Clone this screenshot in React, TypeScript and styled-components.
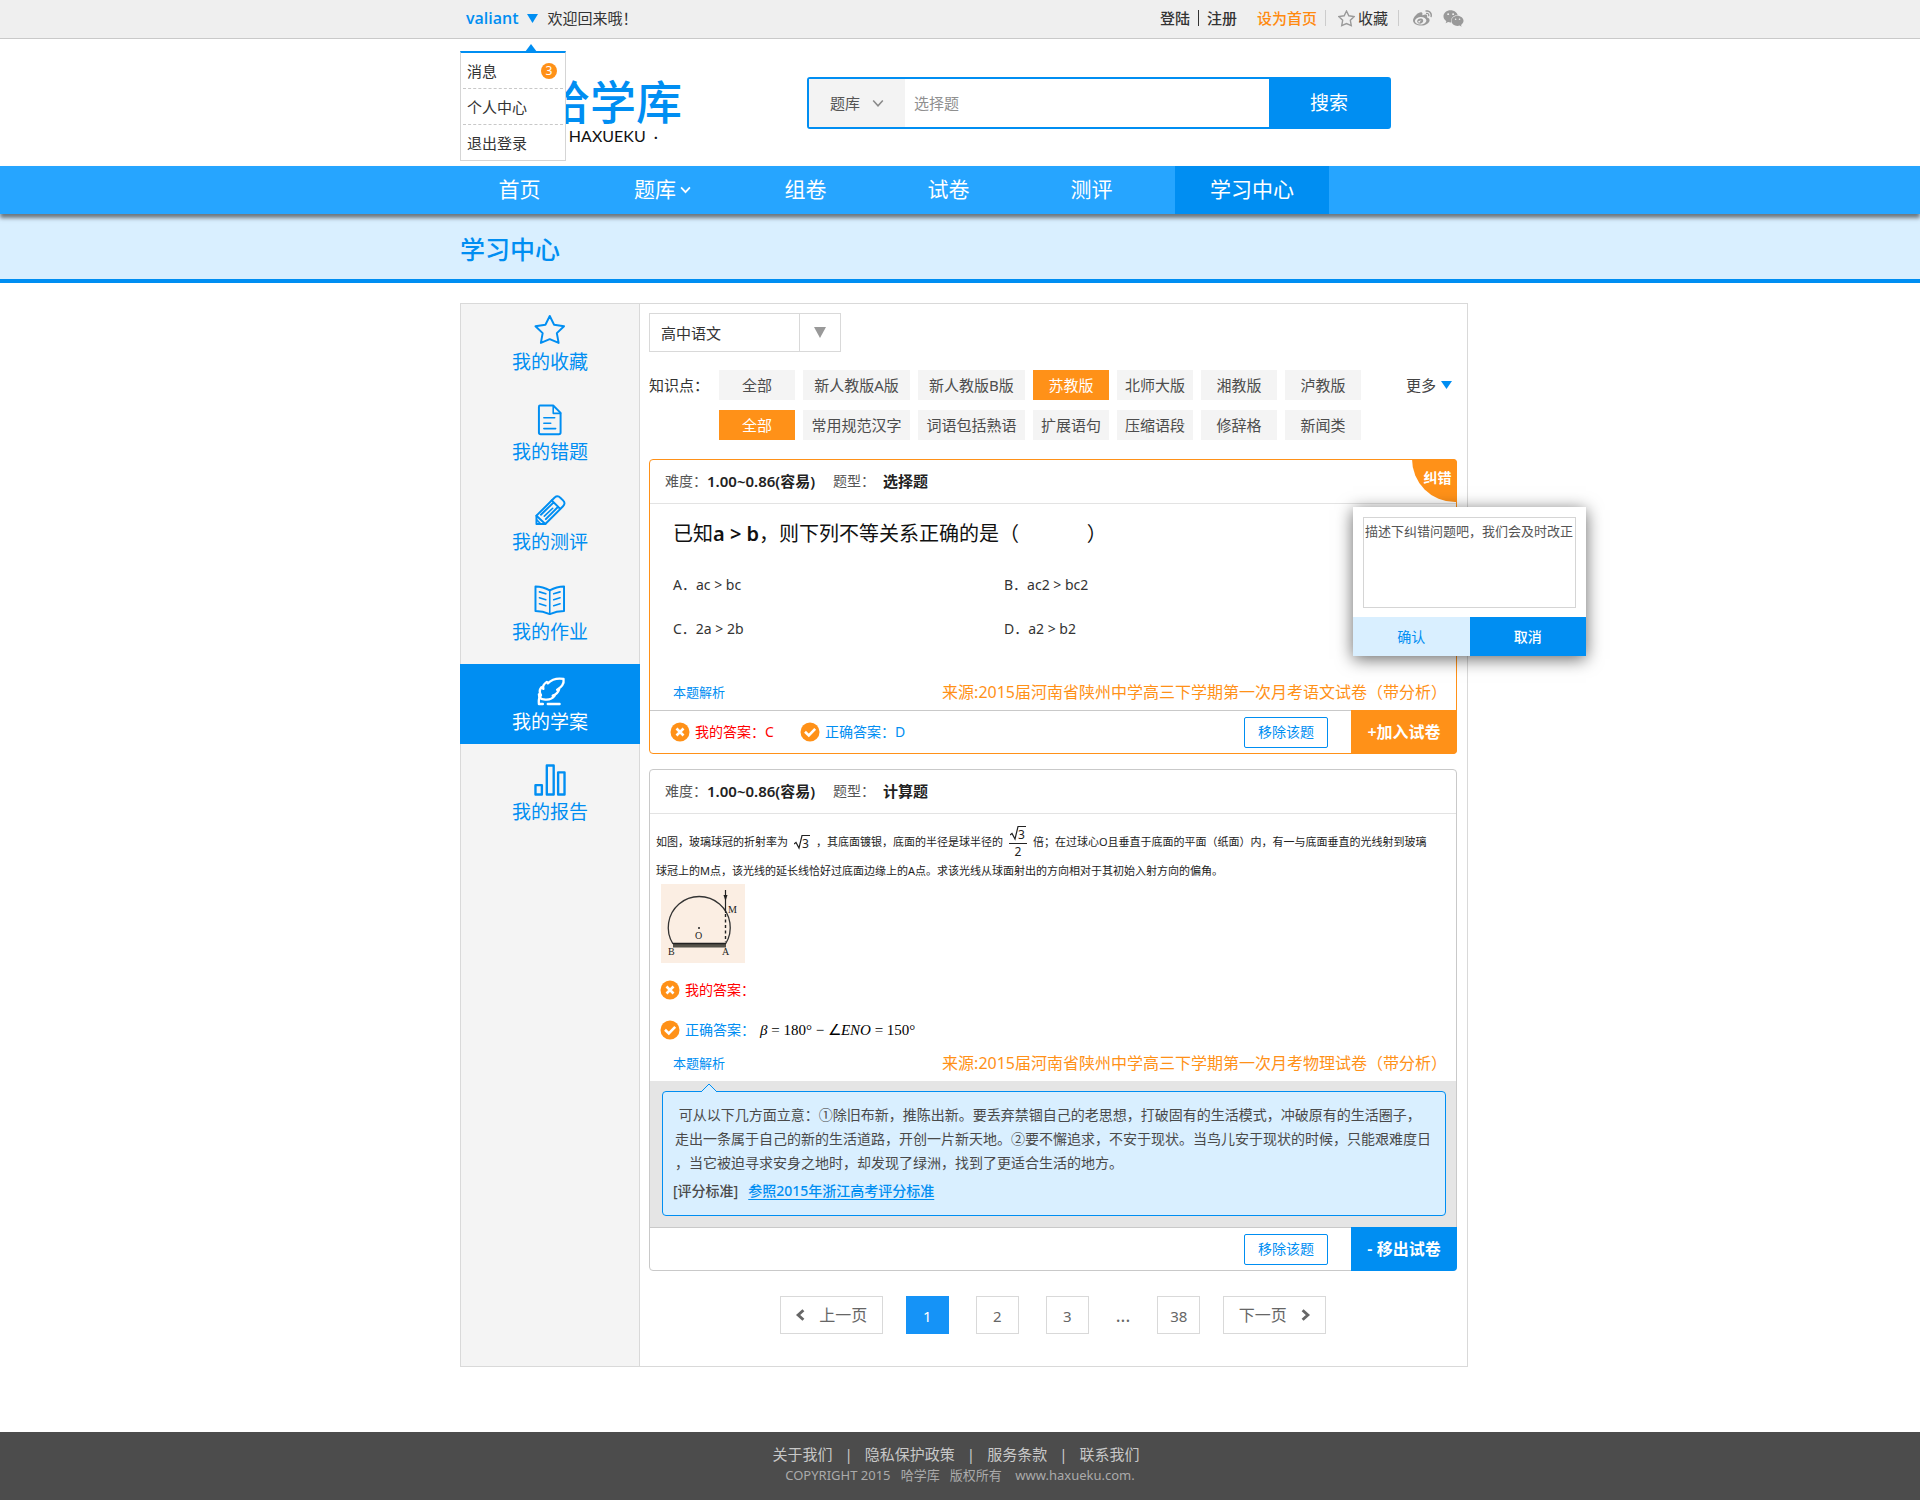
import React, { useState } from "react";
import styled, { createGlobalStyle, css } from "styled-components";
import { FaWeibo, FaWeixin } from "react-icons/fa";

const blue = "#008ef2";
const orange = "#ff9118";
const sans = `"Noto Sans", "Noto Sans CJK SC", sans-serif`;

const GlobalStyle = createGlobalStyle`
  *, *::before, *::after { box-sizing: border-box; }
  body { margin: 0; background: #fff; color: #333; font: 14px/20px ${sans}; }
  a { color: inherit; text-decoration: none; }
  button, input, select, textarea { font: inherit; color: inherit; margin: 0; }
  button { cursor: pointer; padding: 0; border: 0; background: none; }
  ul { list-style: none; margin: 0; padding: 0; }
  p, h1, h2 { margin: 0; }
`;

const Page = styled.div`
  display: flex;
  flex-direction: column;
  min-height: 100vh;
`;

const Container = styled.div`
  width: 100%;
  max-width: 1016px;
  margin: 0 auto;
  padding-left: 8px;
`;

/* ---------- top bar ---------- */

const TopBar = styled.div`
  background: #efefef;
  border-bottom: 1px solid #c9c9c9;
`;

const TopInner = styled(Container)`
  display: flex;
  align-items: center;
  justify-content: space-between;
  height: 38px;
  font-size: 15px;
`;

const Greeting = styled.div`
  position: relative;
  display: flex;
  align-items: center;
  gap: 10px;
  padding: 0 0 2px 6px;
`;

const UserButton = styled.button`
  display: flex;
  align-items: center;
  gap: 8px;
  color: ${blue};
  font: 600 16px/20px "Open Sans", ${sans};
`;

const UserMenu = styled.ul`
  position: absolute;
  top: 43px;
  left: 0;
  z-index: 5;
  width: 106px;
  background: #fff;
  border: 1px solid #d5d5d5;
  border-top: 2px solid ${blue};
  padding: 0 2px;
`;

const MenuArrow = styled.span`
  position: absolute;
  top: -9px;
  left: 64px;
  display: flex;
`;

const MenuItem = styled.li`
  & + & { border-top: 1px dashed #c8c8c8; }
  a {
    display: flex;
    align-items: center;
    justify-content: space-between;
    height: 35px;
    padding: 0 6px 0 4px;
  }
`;

const Badge = styled.span`
  width: 16px;
  border-radius: 8px;
  background: ${orange};
  color: #fff;
  font-size: 12px;
  line-height: 16px;
  text-align: center;
`;

const TopLinks = styled.nav`
  display: flex;
  align-items: center;
  padding: 0 4px 2px 0;
`;

const TopLink = styled.a<{ $tone?: string; $strong?: boolean }>`
  display: flex;
  align-items: center;
  gap: 3px;
  color: ${(p) => p.$tone ?? "#333"};
  font-weight: ${(p) => (p.$strong ? 500 : 400)};
`;

const Bar = styled.span<{ $color?: string; $gap?: number }>`
  width: 1px;
  height: 16px;
  margin: 0 ${(p) => p.$gap ?? 8}px;
  background: ${(p) => p.$color ?? "#333"};
`;

const Space = styled.span<{ $w: number }>`
  width: ${(p) => p.$w}px;
`;

/* ---------- header ---------- */

const HeaderInner = styled(Container)`
  display: flex;
  align-items: flex-start;
  justify-content: space-between;
  height: 127px;
  padding-top: 38px;
  padding-right: 77px;
`;

const Logo = styled.a`
  display: flex;
  flex-direction: column;
  width: 222px;
  align-items: flex-end;
  color: ${blue};
  font-size: 46px;
  font-weight: 500;
  line-height: 48px;
`;

const LogoSub = styled.span`
  padding-right: 24px;
  color: #111;
  font: 400 16px/22px Lato, sans-serif;
  white-space: pre;
`;

const Search = styled.form`
  display: flex;
  width: 584px;
  height: 52px;
  border: 2px solid ${blue};
  border-radius: 3px;
  font-size: 15px;
`;

const Category = styled.button`
  display: flex;
  align-items: center;
  justify-content: center;
  gap: 12px;
  width: 96px;
  background: #f3f3f3;
  color: #555;
  svg { color: #8a8a8a; }
`;

const SearchInput = styled.input`
  flex: 1;
  min-width: 0;
  border: 0;
  padding: 0 9px;
  outline: none;
  &::placeholder { color: #8f8f8f; opacity: 1; }
`;

const SearchButton = styled.button`
  width: 120px;
  background: ${blue};
  color: #fff;
  font-size: 19px;
`;

const NavBar = styled.nav`
  position: relative;
  z-index: 1;
  background: #26a5ff;
  box-shadow: 0 4px 4px rgba(0, 0, 0, 0.5);
`;

const NavList = styled(Container)`
  display: flex;
  gap: 24px;
`;

const NavLink = styled.a<{ $active?: boolean }>`
  display: flex;
  align-items: center;
  justify-content: center;
  gap: 4px;
  width: ${(p) => (p.$active ? 154 : 119)}px;
  height: 48px;
  padding-bottom: 2px;
  background: ${(p) => (p.$active ? blue : "transparent")};
  color: #fff;
  font-size: 21px;
`;

const TitleBand = styled.div`
  background: #d9efff;
  border-bottom: 4px solid ${blue};
`;

const Title = styled.h1`
  padding: 20px 0 15px;
  color: ${blue};
  font-size: 25px;
  font-weight: 500;
  line-height: 30px;
`;

/* ---------- main panel ---------- */

const Main = styled(Container)`
  flex: 1;
  padding-top: 20px;
  padding-bottom: 65px;
`;

const Panel = styled.div`
  display: flex;
  border: 1px solid #d9d9d9;
`;

const Sidebar = styled.nav`
  display: flex;
  flex-direction: column;
  flex: 0 0 179px;
  gap: 10px;
  background: #f4f4f4;
  border-right: 1px solid #d9d9d9;
`;

const SideLink = styled.a<{ $active?: boolean }>`
  display: flex;
  flex-direction: column;
  align-items: center;
  gap: 4px;
  margin: 0 -1px;
  padding: 10px 0;
  background: ${(p) => (p.$active ? blue : "transparent")};
  color: ${(p) => (p.$active ? "#fff" : blue)};
  font-size: 19px;
  line-height: 24px;
`;

const Content = styled.main`
  flex: 1;
  min-width: 0;
  padding: 9px 10px 32px 9px;
`;

const SubjectPicker = styled.label`
  display: flex;
  width: 192px;
  height: 39px;
  border: 1px solid #d9d9d9;
  font-size: 15px;
  select {
    flex: 1;
    min-width: 0;
    padding: 0 11px;
    border: 0;
    background: #fff;
    appearance: none;
    outline: none;
  }
`;

const PickerArrow = styled.span`
  display: flex;
  align-items: center;
  justify-content: center;
  width: 41px;
  border-left: 1px solid #d9d9d9;
  color: #999;
`;

const Filters = styled.div`
  display: grid;
  grid-template-columns: 62px 1fr auto;
  column-gap: 8px;
  row-gap: 10px;
  margin: 18px 5px 19px 0;
  font-size: 15px;
  line-height: 30px;
`;

const Tags = styled.div`
  display: grid;
  grid-template-columns: 76px 107px 107px repeat(4, 76px);
  grid-column: 2;
  gap: 8px;
`;

const Tag = styled.button<{ $on?: boolean }>`
  height: 30px;
  background: ${(p) => (p.$on ? orange : "#f4f4f4")};
  color: ${(p) => (p.$on ? "#fff" : "#4d4d4d")};
  font-size: 15px;
`;

const More = styled.button`
  display: flex;
  align-items: center;
  gap: 5px;
  color: #444;
  svg { color: ${blue}; }
`;

/* ---------- question cards ---------- */

const Card = styled.article<{ $on?: boolean }>`
  position: relative;
  border: 1px solid ${(p) => (p.$on ? orange : "#c9c9c9")};
  border-radius: 4px;
  & + & { margin-top: 15px; }
`;

const CardHead = styled.header`
  display: flex;
  align-items: center;
  height: 44px;
  padding: 0 15px 2px;
  border-bottom: 1px solid #e3e3e3;
  color: #555;
  b { color: #222; font-size: 15px; font-weight: 600; }
  b + span { margin-left: 18px; }
  span + b:last-child { margin-left: 8px; }
`;

const Corner = styled.button`
  position: absolute;
  top: -1px;
  right: -1px;
  width: 45px;
  height: 43px;
  padding: 0 0 6px 6px;
  border-radius: 0 4px 0 45px;
  background: ${orange};
  color: #fff;
  font-weight: 700;
`;

const Popup = styled.form`
  position: absolute;
  z-index: 4;
  top: 47px;
  right: -130px;
  width: 233px;
  background: #fff;
  box-shadow: 0 3px 16px rgba(0, 0, 0, 0.6);
`;

const PopupText = styled.textarea`
  display: block;
  width: 213px;
  height: 91px;
  margin: 10px 10px 9px;
  padding: 3px 1px;
  border: 1px solid #d5d5d5;
  outline: none;
  resize: none;
  overflow: hidden;
  font-size: 13px;
  &::placeholder { color: #555; opacity: 1; }
`;

const PopupActions = styled.div`
  display: grid;
  grid-template-columns: 1fr 1fr;
`;

const PopupButton = styled.button<{ $primary?: boolean }>`
  height: 39px;
  background: ${(p) => (p.$primary ? blue : "#d9efff")};
  color: ${(p) => (p.$primary ? "#fff" : blue)};
  font-weight: ${(p) => (p.$primary ? 500 : 400)};
`;

const Stem = styled.h2`
  padding: 16px 23px 0;
  color: #111;
  font-size: 20px;
  font-weight: 400;
  line-height: 28px;
  white-space: pre-wrap;
  b { font-weight: 600; }
`;

const Options = styled.ul`
  display: grid;
  grid-template-columns: 331px 1fr;
  row-gap: 24px;
  padding: 27px 23px 34px;
`;

const CardSource = styled.div`
  display: flex;
  align-items: center;
  justify-content: space-between;
  height: 37px;
  padding: 0 9px 0 23px;
`;

const ExplainLink = styled.a`
  color: ${blue};
  font-size: 13px;
`;

const SourceLink = styled.a`
  color: ${orange};
  font-size: 16px;
`;

const Answer = styled.span<{ $right?: boolean }>`
  display: flex;
  align-items: center;
  gap: 5px;
  color: ${(p) => (p.$right ? blue : "#f00")};
`;

const CardFoot = styled.footer`
  display: flex;
  align-items: center;
  height: 43px;
  padding-left: 20px;
  border-top: 1px solid #c9c9c9;
  ${Answer} { min-width: 130px; }
`;

const RemoveButton = styled.button`
  width: 84px;
  height: 31px;
  margin: 0 23px 0 auto;
  border: 1px solid ${blue};
  border-radius: 2px;
  color: ${blue};
`;

const PaperButton = styled.button<{ $tone: string }>`
  width: 106px;
  height: 44px;
  margin: -1px -1px -1px 0;
  border-radius: 0 0 4px 0;
  background: ${(p) => p.$tone};
  color: #fff;
  font-size: 16px;
  font-weight: 600;
  white-space: pre;
`;

const Problem = styled.div`
  padding: 8px 6px 0;
  color: #222;
  font-size: 11px;
`;

const ProblemLine = styled.p`
  display: flex;
  align-items: center;
  height: 39px;
  & + & { height: 20px; }
`;

const Fraction = styled.span`
  display: flex;
  flex-direction: column;
  align-items: center;
  margin: 0 6px;
  font: 12px/15px "Noto Sans", sans-serif;
`;

const Numerator = styled.span`
  display: flex;
  padding: 1px 1px 2px;
  border-bottom: 1px solid #222;
`;

const RootWrap = styled.span`
  display: flex;
  margin: 0 6px;
`;

const Figure = styled.div`
  display: flex;
  padding: 3px 5px 0;
`;

const Answers = styled.div`
  display: grid;
  row-gap: 20px;
  padding: 17px 10px 4px;
`;

const AnswerLine = styled.div`
  display: flex;
  align-items: center;
  gap: 5px;
  height: 20px;
`;

const Formula = styled.span`
  color: #000;
  font: 15px/20px "Liberation Serif", serif;
  white-space: pre;
`;

const Explain = styled.section`
  padding: 10px 10px 11px 12px;
  background: #e5e5e5;
`;

const ExplainBox = styled.div`
  position: relative;
  padding: 11px 12px 12px;
  border: 1px solid ${blue};
  border-radius: 4px;
  background: #d9efff;
  color: #4a4a4a;
  line-height: 24px;
`;

const ExplainArrow = styled.span`
  position: absolute;
  top: -9px;
  left: 37px;
  display: flex;
`;

const ExplainText = styled.p`
  white-space: pre-wrap;
`;

const Standard = styled.p`
  display: flex;
  gap: 10px;
  margin: 4px -2px 0;
  font-weight: 500;
  a { color: ${blue}; text-decoration: underline; text-underline-offset: 3px; }
`;

/* ---------- pagination and footer ---------- */

const Pager = styled.nav`
  display: flex;
  justify-content: center;
  gap: 23px;
  margin-top: 25px;
  color: #666;
`;

const PageNumbers = styled.div`
  display: flex;
  gap: 27px;
  line-height: 38px;
`;

const pagerBox = css`
  height: 38px;
  border: 1px solid #d9d9d9;
`;

const PageButton = styled.button<{ $on?: boolean }>`
  ${pagerBox}
  width: 43px;
  font-size: 15px;
  ${(p) => p.$on && css`
    border-color: #1593f7;
    background: #1593f7;
    color: #fff;
  `}
`;

const StepButton = styled.button`
  ${pagerBox}
  display: flex;
  align-items: center;
  justify-content: center;
  gap: 12px;
  width: 103px;
  font-size: 16px;
`;

const Dots = styled.span`
  font-size: 18px;
`;

const Footer = styled.footer`
  padding: 11px 0 14px;
  background: #4c4c4c;
  color: #c8c8c8;
`;

const FooterLinks = styled.div`
  display: flex;
  align-items: center;
  justify-content: center;
  gap: 12px;
  padding-right: 8px;
  font-size: 15px;
  line-height: 22px;
`;

const Copyright = styled.p`
  color: #aaa;
  font-size: 13px;
  line-height: 21px;
  text-align: center;
  white-space: pre;
`;

/* ---------- icons ---------- */

const Caret = ({ w = 11, h = 8 }: { w?: number; h?: number }) => (
  <svg width={w} height={h} viewBox="0 0 10 8" preserveAspectRatio="none" aria-hidden="true">
    <path d="M0 0H10L5 8Z" fill="currentColor" />
  </svg>
);

const Chevron = ({ turn = 0, size = 10, weight = 1.6 }: { turn?: number; size?: number; weight?: number }) => (
  <svg width={size} height={size} viewBox="0 0 10 10" aria-hidden="true">
    <path
      d="M1 3L5 7.4L9 3"
      transform={`rotate(${turn} 5 5)`}
      fill="none"
      stroke="currentColor"
      strokeWidth={weight}
    />
  </svg>
);

const starPath = "M16 2L20.4 10.9L30.5 12.4L23.2 19.4L25 29.4L16 25.6L7 29.4L8.8 19.4L1.5 12.4L11.6 10.9Z";

const sideIcons: Record<string, React.ReactNode> = {
  star: <path d={starPath} />,
  doc: (
    <>
      <path d="M6 1.5H19.5L27 9V29Q27 30.8 25.2 30.8H6.8Q5 30.8 5 29V3Q5 1.5 6 1.5Z" />
      <path d="M19.5 2V9.5H27M10 14H21M10 19.5H17M10 25H22" strokeWidth="1.6" />
    </>
  ),
  pencil: (
    <>
      <path d="M2.5 30.5V22L21 3.5Q24 1 27 4L29.5 6.5Q32.5 9.5 29.5 12.5L11.5 30.5Z" />
      <path d="M2.5 22L11.5 30.5M18 6.5L26.5 15M7 21L20 8.5M12 25.5L24.5 13" />
      <path d="M10.5 22.5L19 14.5M3 26.5L6.5 30" strokeWidth="1.6" />
    </>
  ),
  book: (
    <>
      <path d="M16 6.5Q9 2.5 1.5 2.5V27.5Q9 27.5 16 30.5Q23 27.5 30.5 27.5V2.5Q23 2.5 16 6.5Z" />
      <path d="M16 6.5V30.5M5.5 8L12 10M5.5 14L12 16M5.5 20L12 22M26.5 8L20 10M26.5 14L20 16M26.5 20L20 22" strokeWidth="1.6" />
    </>
  ),
  feather: (
    <>
      <path d="M30 5C24 4 18 5.5 14 9.5L13 8C10 10 8.5 12 9.500 15L7.500 13.500C5.500 16 5.500 19 7 21.500L5 20.500C5 23.500 7 25.500 10 25.800C14 26.500 18.500 25.500 21 22L19 22C22 21 24.500 18.500 25.500 15.500L23.500 16C27 13.500 31 11 30 5Z" />
      <path d="M7 21.500C5 24 4.500 27 5 30.500H9M14 30.500H26" />
    </>
  ),
  bars: <path d="M1.500 21.500H8V31H1.500ZM13 1.500H20V31H13ZM24.500 8.500H31V31H24.500Z" />,
};

const SideIcon = ({ name }: { name: string }) => (
  <svg
    width="32"
    height="32"
    viewBox="0 0 32.500 32.500"
    fill="none"
    stroke="currentColor"
    strokeWidth={name === "bars" || name === "feather" ? 2.400 : 2}
    strokeLinejoin="round"
    strokeLinecap="round"
    aria-hidden="true"
  >
    {sideIcons[name]}
  </svg>
);

const Mark = ({ ok }: { ok?: boolean }) => (
  <svg width="20" height="20" viewBox="0 0 20 20" aria-hidden="true">
    <circle cx="10" cy="10" r="9.500" fill={orange} />
    <path
      d={ok ? "M5 9.800L8.800 13.400L15.200 6.800" : "M6.500 6.500L13.500 13.500M13.500 6.500L6.500 13.500"}
      fill="none"
      stroke="#fff"
      strokeWidth="2.600"
    />
  </svg>
);

const Root = () => (
  <svg width="16" height="16" viewBox="0 0 16 16" role="img" aria-label="根号3">
    <path d="M0 10L2 8.500L5 14L8 1.500H16" fill="none" stroke="#222" strokeWidth="1.200" />
    <text x="8" y="13.500" fontSize="12" fill="#222" fontFamily="Noto Sans">3</text>
  </svg>
);

const Diagram = () => (
  <svg width="84" height="79" viewBox="0 0 84 79" role="img" aria-label="玻璃球冠">
    <rect width="84" height="79" fill="#fbeee3" />
    <path d="M12 60A31 31 0 1 1 64.500 60" fill="none" stroke="#333" strokeWidth="1.300" />
    <rect x="12" y="59" width="53" height="4.500" fill="#55524a" />
    <path d="M12 59.500H65" stroke="#222" strokeWidth="1.500" />
    <path d="M64.500 6V29" stroke="#222" strokeWidth="1.200" />
    <path d="M62.500 11H66.500L64.500 17Z" fill="#222" />
    <path d="M64.500 30V58" stroke="#222" strokeWidth="1.400" strokeDasharray="3 2.500" />
    <circle cx="38" cy="44" r="1" fill="#222" />
    <g fontFamily="Liberation Serif" fontSize="10" fill="#222">
      <text x="67" y="29">M</text>
      <text x="34" y="55">O</text>
      <text x="7" y="71">B</text>
      <text x="61" y="71">A</text>
    </g>
  </svg>
);

/* ---------- content ---------- */

const sideItems = [
  ["star", "我的收藏"],
  ["doc", "我的错题"],
  ["pencil", "我的测评"],
  ["book", "我的作业"],
  ["feather", "我的学案"],
  ["bars", "我的报告"],
];

const editions = ["全部", "新人教版A版", "新人教版B版", "苏教版", "北师大版", "湘教版", "泸教版"];
const topics = ["全部", "常用规范汉字", "词语包括熟语", "扩展语句", "压缩语段", "修辞格", "新闻类"];

const explanation =
  " 可从以下几方面立意：①除旧布新，推陈出新。要丢弃禁锢自己的老思想，打破固有的生活模式，冲破原有的生活圈子，\n" +
  "走出一条属于自己的新的生活道路，开创一片新天地。②要不懈追求，不安于现状。当鸟儿安于现状的时候，只能艰难度日\n" +
  "，当它被迫寻求安身之地时，却发现了绿洲，找到了更适合生活的地方。";

const TagRow = ({ items, value, onPick }: { items: string[]; value: string; onPick: (v: string) => void }) => (
  <Tags>
    {items.map((item) => (
      <Tag key={item} type="button" $on={item === value} onClick={() => onPick(item)}>
        {item}
      </Tag>
    ))}
  </Tags>
);

const QuestionHead = ({ kind }: { kind: string }) => (
  <CardHead>
    <span>难度：</span>
    <b>1.00~0.86(容易)</b>
    <span>题型：</span>
    <b>{kind}</b>
  </CardHead>
);

export default function App() {
  const [edition, setEdition] = useState("苏教版");
  const [topic, setTopic] = useState("全部");

  return (
    <Page>
      <GlobalStyle />
      <TopBar>
        <TopInner>
          <Greeting>
            <UserButton type="button">
              valiant <Caret w={11} h={9} />
            </UserButton>
            <span>欢迎回来哦！</span>
            <UserMenu>
              <MenuArrow>
                <svg width="12" height="8" viewBox="0 0 12 8" aria-hidden="true">
                  <path d="M6 0L12 8H0Z" fill={blue} />
                </svg>
              </MenuArrow>
              <MenuItem><a href="#messages">消息<Badge>3</Badge></a></MenuItem>
              <MenuItem><a href="#profile">个人中心</a></MenuItem>
              <MenuItem><a href="#logout">退出登录</a></MenuItem>
            </UserMenu>
          </Greeting>
          <TopLinks>
            <TopLink href="#login" $strong>登陆</TopLink>
            <Bar />
            <TopLink href="#register" $strong>注册</TopLink>
            <Space $w={20} />
            <TopLink href="#home" $tone="#ff8a0f" $strong>设为首页</TopLink>
            <Bar $color="#ccc" />
            <Space $w={4} />
            <TopLink href="#favorite">
              <svg width="17" height="17" viewBox="0 0 32 32" fill="none" stroke="#999" strokeWidth="2.600" aria-hidden="true">
                <path d={starPath} />
              </svg>
              收藏
            </TopLink>
            <Bar $color="#ccc" $gap={10} />
            <Space $w={4} />
            <TopLink href="#weibo" $tone="#999" aria-label="微博"><FaWeibo size={19} /></TopLink>
            <Space $w={11} />
            <TopLink href="#weixin" $tone="#999" aria-label="微信"><FaWeixin size={21} /></TopLink>
          </TopLinks>
        </TopInner>
      </TopBar>

      <header>
        <HeaderInner>
          <Logo href="#top">
            哈学库
            <LogoSub>·  HAXUEKU  ·</LogoSub>
          </Logo>
          <Search>
            <Category type="button">题库 <Chevron size={12} weight={1.300} /></Category>
            <SearchInput aria-label="搜索内容" placeholder="选择题" />
            <SearchButton type="button">搜索</SearchButton>
          </Search>
        </HeaderInner>
        <NavBar>
          <NavList>
            <NavLink href="#index">首页</NavLink>
            <NavLink href="#bank">题库 <Chevron size={11} /></NavLink>
            <NavLink href="#compose">组卷</NavLink>
            <NavLink href="#papers">试卷</NavLink>
            <NavLink href="#assess">测评</NavLink>
            <NavLink href="#study" $active>学习中心</NavLink>
          </NavList>
        </NavBar>
      </header>
      <TitleBand>
        <Container>
          <Title>学习中心</Title>
        </Container>
      </TitleBand>

      <Main>
        <Panel>
          <Sidebar>
            {sideItems.map(([icon, label]) => (
              <SideLink key={icon} href={`#${icon}`} $active={icon === "feather"}>
                <SideIcon name={icon} />
                {label}
              </SideLink>
            ))}
          </Sidebar>

          <Content>
            <SubjectPicker>
              <select aria-label="学科" defaultValue="高中语文">
                <option>高中语文</option>
              </select>
              <PickerArrow><Caret w={12} h={11} /></PickerArrow>
            </SubjectPicker>

            <Filters>
              <span>知识点：</span>
              <TagRow items={editions} value={edition} onPick={setEdition} />
              <More type="button">更多 <Caret /></More>
              <TagRow items={topics} value={topic} onPick={setTopic} />
            </Filters>

            <Card $on>
              <QuestionHead kind="选择题" />
              <Corner type="button">纠错</Corner>
              <Popup>
                <PopupText aria-label="纠错描述" placeholder="描述下纠错问题吧，我们会及时改正" />
                <PopupActions>
                  <PopupButton type="button">确认</PopupButton>
                  <PopupButton type="button" $primary>取消</PopupButton>
                </PopupActions>
              </Popup>
              <Stem>已知<b>a &gt; b</b>，则下列不等关系正确的是（{"             "}）</Stem>
              <Options>
                <li>A．ac &gt; bc</li>
                <li>B．ac2 &gt; bc2</li>
                <li>C．2a &gt; 2b</li>
                <li>D．a2 &gt; b2</li>
              </Options>
              <CardSource>
                <ExplainLink href="#explain-1">本题解析</ExplainLink>
                <SourceLink href="#source-1">来源:2015届河南省陕州中学高三下学期第一次月考语文试卷（带分析）</SourceLink>
              </CardSource>
              <CardFoot>
                <Answer><Mark />我的答案：C</Answer>
                <Answer $right><Mark ok />正确答案：D</Answer>
                <RemoveButton type="button">移除该题</RemoveButton>
                <PaperButton type="button" $tone={orange}>+加入试卷</PaperButton>
              </CardFoot>
            </Card>

            <Card>
              <QuestionHead kind="计算题" />
              <Problem>
                <ProblemLine>
                  如图，玻璃球冠的折射率为
                  <RootWrap><Root /></RootWrap>
                  ，其底面镀银，底面的半径是球半径的
                  <Fraction>
                    <Numerator><Root /></Numerator>
                    2
                  </Fraction>
                  倍；在过球心O且垂直于底面的平面（纸面）内，有一与底面垂直的光线射到玻璃
                </ProblemLine>
                <ProblemLine>
                  球冠上的M点，该光线的延长线恰好过底面边缘上的A点。求该光线从球面射出的方向相对于其初始入射方向的偏角。
                </ProblemLine>
                <Figure><Diagram /></Figure>
              </Problem>
              <Answers>
                <AnswerLine><Answer><Mark />我的答案：</Answer></AnswerLine>
                <AnswerLine>
                  <Answer $right><Mark ok />正确答案：</Answer>
                  <Formula>
                    <i>β</i> = 180° − ∠<i>ENO</i> = 150°
                  </Formula>
                </AnswerLine>
              </Answers>
              <CardSource>
                <ExplainLink href="#explain-2">本题解析</ExplainLink>
                <SourceLink href="#source-2">来源:2015届河南省陕州中学高三下学期第一次月考物理试卷（带分析）</SourceLink>
              </CardSource>
              <Explain>
                <ExplainBox>
                  <ExplainArrow>
                    <svg width="18" height="10" viewBox="0 0 18 10" aria-hidden="true">
                      <path d="M1 9L9 1L17 9V10H1Z" fill="#d9efff" />
                      <path d="M1 9L9 1L17 9" fill="none" stroke={blue} />
                    </svg>
                  </ExplainArrow>
                  <ExplainText>{explanation}</ExplainText>
                  <Standard>
                    [评分标准]
                    <a href="#standard">参照2015年浙江高考评分标准</a>
                  </Standard>
                </ExplainBox>
              </Explain>
              <CardFoot>
                <RemoveButton type="button">移除该题</RemoveButton>
                <PaperButton type="button" $tone={blue}>- 移出试卷</PaperButton>
              </CardFoot>
            </Card>

            <Pager aria-label="分页">
              <StepButton type="button"><Chevron turn={90} size={12} weight={2.400} />上一页</StepButton>
              <PageNumbers>
                <PageButton type="button" $on>1</PageButton>
                <PageButton type="button">2</PageButton>
                <PageButton type="button">3</PageButton>
                <Dots>...</Dots>
                <PageButton type="button">38</PageButton>
              </PageNumbers>
              <StepButton type="button">下一页<Chevron turn={-90} size={12} weight={2.400} /></StepButton>
            </Pager>
          </Content>
        </Panel>
      </Main>

      <Footer>
        <FooterLinks>
          <a href="#about">关于我们</a>|
          <a href="#privacy">隐私保护政策</a>|
          <a href="#terms">服务条款</a>|
          <a href="#contact">联系我们</a>
        </FooterLinks>
        <Copyright>COPYRIGHT 2015   哈学库   版权所有    www.haxueku.com.</Copyright>
      </Footer>
    </Page>
  );
}
